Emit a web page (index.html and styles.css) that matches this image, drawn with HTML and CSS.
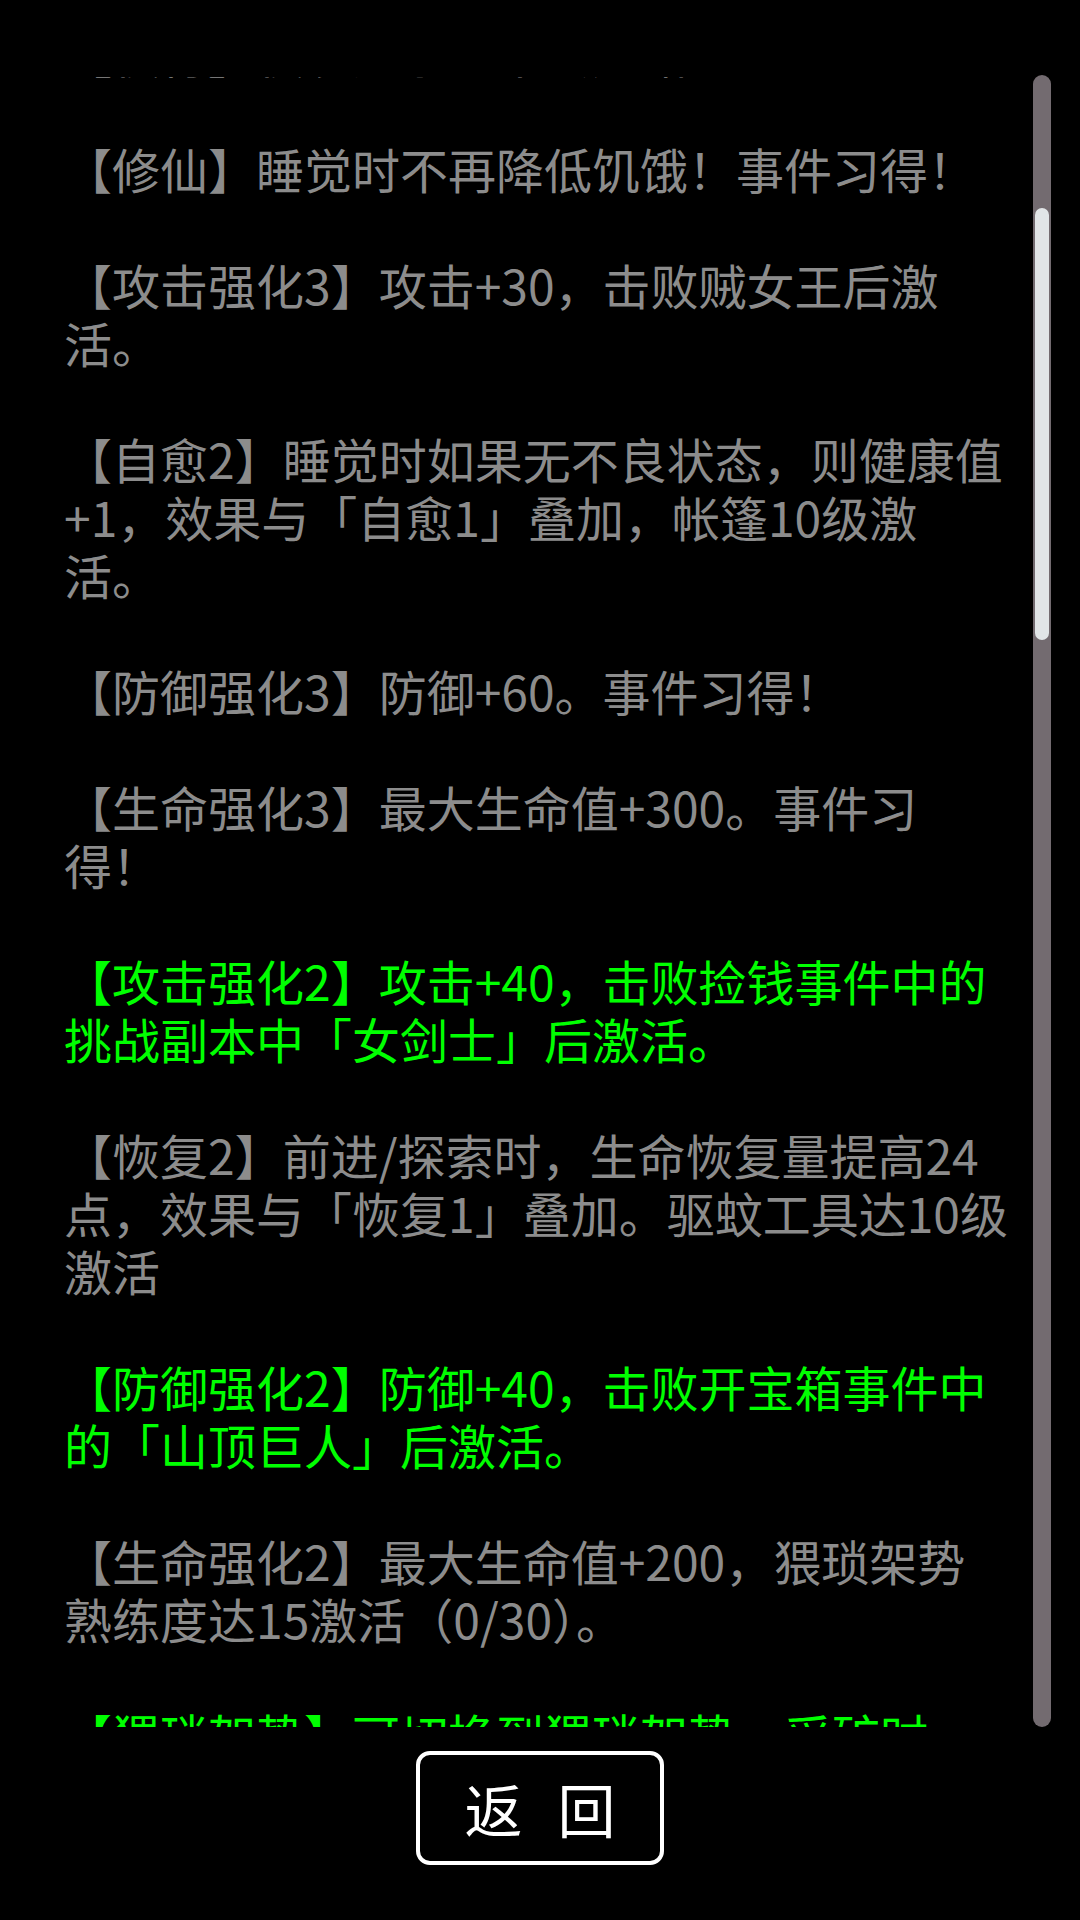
FILE: index.html
```html
<!DOCTYPE html>
<html lang="zh-CN">
<head>
    <meta charset="UTF-8">
    <meta name="viewport" content="width=device-width, initial-scale=1.0">
    <title>技能</title>
    <link rel="stylesheet" href="styles.css">
</head>
<body>
    <div class="screen">
        <div class="main">
            <div class="log">
                <div class="log-inner">
                    <p class="entry">【夜行】夜晚探索时不会迷路。</p>
                    <p class="entry">【修仙】睡觉时不再降低饥饿！事件习得！</p>
                    <p class="entry">【攻击强化3】攻击+30，击败贼女王后激<br>活。</p>
                    <p class="entry">【自愈2】睡觉时如果无不良状态，则健康值<br>+1，效果与「自愈1」叠加，帐篷10级激<br>活。</p>
                    <p class="entry">【防御强化3】防御+60。事件习得！</p>
                    <p class="entry">【生命强化3】最大生命值+300。事件习<br>得！</p>
                    <p class="entry on">【攻击强化2】攻击+40，击败捡钱事件中的<br>挑战副本中「女剑士」后激活。</p>
                    <p class="entry">【恢复2】前进/探索时，生命恢复量提高24<br>点，效果与「恢复1」叠加。驱蚊工具达10级<br>激活</p>
                    <p class="entry on">【防御强化2】防御+40，击败开宝箱事件中<br>的「山顶巨人」后激活。</p>
                    <p class="entry">【生命强化2】最大生命值+200，猥琐架势<br>熟练度达15激活（0/30）。</p>
                    <p class="entry on">【猥琐架势】可切换到猥琐架势，采矿时<br>获得额外矿石。</p>
                </div>
            </div>
            <div class="scrollbar">
                <div class="thumb"></div>
            </div>
        </div>
        <div class="footer">
            <button class="back-btn" type="button">返 回</button>
        </div>
    </div>
</body>
</html>
```

FILE: styles.css
```css
body {
    margin: 0;
    background-color: #000;
    color: #8c8c8c;
    font-family: "Noto Sans CJK SC", "Noto Sans", sans-serif;
}
.screen {
    width: 1080px;
    height: 1920px;
    padding-top: 75px;
    box-sizing: border-box;
}
.main {
    display: flex;
    height: 1652px;
}
.log {
    flex: 1;
    overflow: hidden;
    margin-top: 2px;
    padding-left: 64px;
}
/* list is scrolled down a little */
.log-inner {
    margin-top: -54px;
}
.entry {
    margin: 0 0 58px 0;
    font-size: 48px;
    line-height: 58px;
    white-space: nowrap;
}
.entry.on {
    color: #00ff00;
}
.scrollbar {
    width: 18px;
    margin-right: 29px;
    background-color: #736b70;
    border-radius: 9px;
    padding: 133px 2px 0 2px;
    box-sizing: border-box;
}
.thumb {
    height: 432px;
    background-color: #e1e5e7;
    border-radius: 7px;
}
.footer {
    display: flex;
    justify-content: center;
    padding-top: 24px;
}
.back-btn {
    width: 248px;
    height: 114px;
    background-color: #000;
    color: #fff;
    border: 4px solid #fff;
    border-radius: 14px;
    font-family: "Noto Sans CJK SC", sans-serif;
    font-size: 58px;
    letter-spacing: 11px;
    padding: 0 0 0 11px;
    cursor: pointer;
}
```
